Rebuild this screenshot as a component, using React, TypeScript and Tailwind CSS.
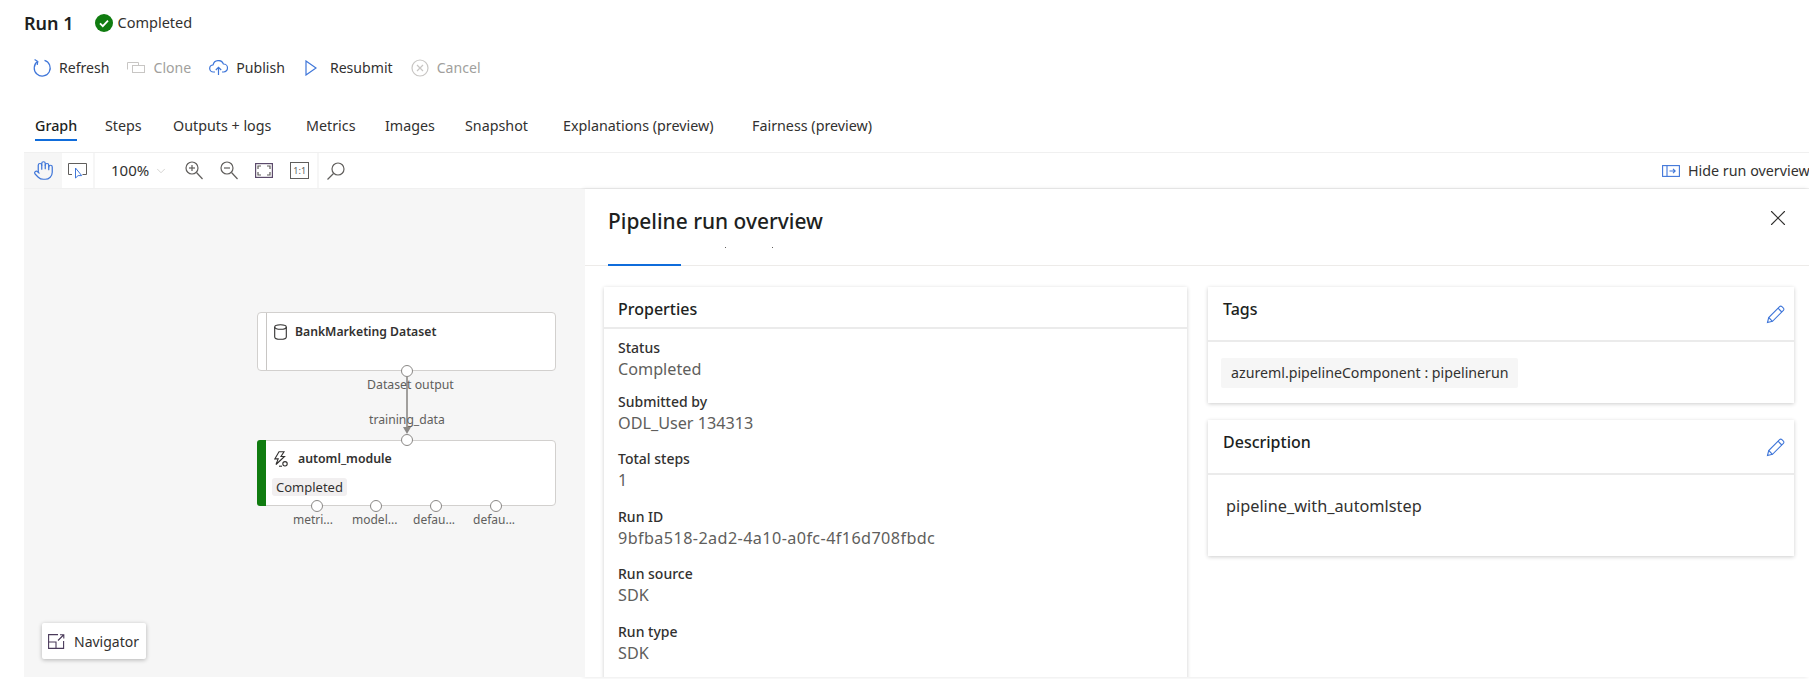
import { ChevronDown, Hand, X } from "lucide-react";

const BLUE = "#3f76d9";

const tabs = [
  { label: "Graph", width: "w-[42px]", gap: "mr-[28px]", active: true },
  { label: "Steps", width: "w-[37px]", gap: "mr-[31px]" },
  { label: "Outputs + logs", width: "w-[104px]", gap: "mr-[29px]" },
  { label: "Metrics", width: "w-[50px]", gap: "mr-[29px]" },
  { label: "Images", width: "w-[50px]", gap: "mr-[30px]" },
  { label: "Snapshot", width: "w-[63px]", gap: "mr-[35px]" },
  { label: "Explanations (preview)", width: "w-[152px]", gap: "mr-[37px]" },
  { label: "Fairness (preview)", width: "w-[121px]", gap: "" },
];

const properties = [
  { label: "Status", value: "Completed", spacing: "" },
  { label: "Submitted by", value: "ODL_User 134313", spacing: "" },
  { label: "Total steps", value: "1", spacing: "" },
  { label: "Run ID", value: "9bfba518-2ad2-4a10-a0fc-4f16d708fbdc", spacing: "tracking-[0.4px]" },
  { label: "Run source", value: "SDK", spacing: "" },
  { label: "Run type", value: "SDK", spacing: "" },
];

const outputPorts = [
  { x: "left-[54px]", lx: "left-[36px]", label: "metri..." },
  { x: "left-[113px]", lx: "left-[95px]", label: "model..." },
  { x: "left-[173px]", lx: "left-[156px]", label: "defau..." },
  { x: "left-[233px]", lx: "left-[216px]", label: "defau..." },
];

function RefreshIcon() {
  return (
    <svg width="20" height="20" viewBox="0 0 20 20" fill="none" stroke={BLUE} strokeWidth="1.2">
      <path d="M5.5 3.6A8 8 0 1 0 12.5 2.4" />
      <path d="M2.6 1.6 L5.8 3.6 L5.2 7" />
    </svg>
  );
}

function CloneIcon() {
  return (
    <svg width="18" height="12" viewBox="0 0 18 12" fill="none" stroke="#c8c6c4" strokeWidth="1">
      <path d="M.5 7.5v-7h11v3" />
      <rect x="5.5" y="3.5" width="12" height="7" />
    </svg>
  );
}

function PublishIcon() {
  return (
    <svg width="19" height="16" viewBox="0 0 19 16" fill="none" stroke={BLUE} strokeWidth="1.2">
      <path d="M6 12H4.5a3.6 3.6 0 0 1-.4-7.2A5.4 5.4 0 0 1 14.4 4a4 4 0 0 1 .2 8H13" />
      <path d="M9.5 15V7.5M6.8 10l2.7-2.7 2.7 2.7" />
    </svg>
  );
}

function ResubmitIcon() {
  return (
    <svg width="12" height="16" viewBox="0 0 12 16" fill="none" stroke={BLUE} strokeWidth="1.2">
      <path d="M1 1v14l10-7z" />
    </svg>
  );
}

function CancelIcon() {
  return (
    <svg width="18" height="18" viewBox="0 0 18 18" fill="none" stroke="#c8c6c4" strokeWidth="1.2">
      <circle cx="9" cy="9" r="8" />
      <path d="M6 6l6 6M12 6l-6 6" />
    </svg>
  );
}

function SelectIcon() {
  return (
    <svg width="19" height="16" viewBox="0 0 19 16" fill="none" stroke="#605e5c" strokeWidth="1">
      <path d="M4 11.5H.5V.5h18v11h-4" />
      <path d="M7.5 5v10l2.6-2.4h3.6z" stroke="#3f76d9" />
    </svg>
  );
}

function ZoomIcon({ plus }: { plus: boolean }) {
  return (
    <svg width="18" height="19" viewBox="0 0 18 19" fill="none" stroke="#605e5c" strokeWidth="1.2">
      <circle cx="7" cy="7" r="6" />
      <path d="M11.5 11.5L17.5 18" />
      <path d="M4 7h6" />
      {plus ? <path d="M7 4v6" /> : null}
    </svg>
  );
}

function FitIcon() {
  return (
    <svg width="18" height="15" viewBox="0 0 18 15" fill="none" stroke="#5b4a6b" strokeWidth="1.2">
      <rect x=".6" y=".6" width="16.8" height="13.8" />
      <path d="M3 6V3h3M12 3h3v3M15 9v3h-3M6 12H3V9" stroke="#605e5c" />
    </svg>
  );
}

function SearchIcon() {
  return (
    <svg width="18" height="18" viewBox="0 0 18 18" fill="none" stroke="#605e5c" strokeWidth="1.2">
      <circle cx="11" cy="7" r="6" />
      <path d="M6.5 11.5L.5 17.5" />
    </svg>
  );
}

function HidePanelIcon() {
  return (
    <svg width="18" height="12" viewBox="0 0 18 12" fill="none" stroke={BLUE} strokeWidth="1.1">
      <rect x=".6" y=".6" width="16.8" height="10.8" />
      <path d="M5 .6v10.8M7.5 6H13M11 3.8L13.2 6 11 8.2" />
    </svg>
  );
}

function PencilIcon() {
  return (
    <svg width="19" height="19" viewBox="0 0 19 19" fill="none" stroke={BLUE} strokeWidth="1.1">
      <path d="M1.5 17.5l1.2-5L13.6 1.6a1.6 1.6 0 0 1 2.3 0l1.5 1.5a1.6 1.6 0 0 1 0 2.3L6.5 16.3z" />
      <path d="M2.7 12.5l3.8 3.8M12 3.2l3.8 3.8" />
    </svg>
  );
}

function DatasetIcon() {
  return (
    <svg width="13" height="16" viewBox="0 0 13 16" fill="none" stroke="#323130" strokeWidth="1.1">
      <ellipse cx="6.5" cy="3" rx="5.8" ry="2.3" />
      <path d="M.7 3v10c0 1.3 2.6 2.3 5.8 2.3s5.8-1 5.8-2.3V3" />
    </svg>
  );
}

function ModuleIcon() {
  return (
    <svg width="14" height="16" viewBox="0 0 14 16" fill="none" stroke="#323130" strokeWidth="1.1">
      <path d="M5 .8h5L7 5.5h3.5L2 13.5l2.2-5.6H.8z" />
      <circle cx="11" cy="12.8" r="2.2" />
      <path d="M5 15.2h3" />
    </svg>
  );
}

function NavigatorIcon() {
  return (
    <svg width="17" height="15" viewBox="0 0 17 15" fill="none" stroke="#4a3a5a" strokeWidth="1.1">
      <path d="M10 .6H.6v13.8h15V7" />
      <path d="M.6 8h7.4v6.4" />
      <path d="M10 6.5L15.5 1M12 .8h3.8v3.8" />
    </svg>
  );
}

function Port({ className }: { className: string }) {
  return (
    <span
      className={`absolute h-[12px] w-[12px] rounded-full border border-[#8a8886] bg-white ${className}`}
    />
  );
}

function Graph() {
  return (
    <div className="relative h-full w-[561px] shrink-0 bg-[#f6f6f6] text-[#605e5c]">
      {/* edge between the two nodes */}
      <div className="absolute left-[382px] top-[188px] h-[55px] w-[2px] bg-[#a19f9d]" />
      <div className="absolute left-[379px] top-[238px] h-0 w-0 border-x-[4px] border-t-[7px] border-x-transparent border-t-[#8a8886]" />

      {/* dataset node */}
      <div className="absolute left-[233px] top-[123px] flex h-[59px] w-[299px] rounded-[4px] border border-[#d2d0ce] bg-white">
        <div className="w-[9px] border-r border-[#c8c6c4]" />
        <div className="flex h-[38px] items-center pl-[7px]">
          <DatasetIcon />
          <span className="ml-[8px] whitespace-nowrap text-[12.2px] font-semibold text-[#323130]">
            BankMarketing Dataset
          </span>
        </div>
      </div>
      <Port className="left-[377px] top-[176px]" />
      <span className="absolute left-[343px] top-[186px] text-[12.3px] leading-[20px]">
        Dataset output
      </span>
      <span className="absolute left-[345px] top-[221px] text-[12.2px] leading-[20px]">
        training_data
      </span>

      {/* automl node */}
      <div className="absolute left-[233px] top-[251px] flex h-[66px] w-[299px] rounded-[4px] border border-[#d2d0ce] bg-white">
        <div className="-my-px -ml-px w-[9px] rounded-l-[3px] bg-[#107c10]" />
        <div className="pl-[8px] pt-[9px]">
          <div className="flex items-center">
            <ModuleIcon />
            <span className="ml-[10px] text-[12.3px] font-semibold text-[#323130]">automl_module</span>
          </div>
          <span className="-ml-[2px] mt-[10px] block w-fit rounded-[3px] bg-[#f1eff0] px-[4px] text-[13px] leading-[18px] text-[#323130]">
            Completed
          </span>
        </div>
      </div>
      <Port className="left-[377px] top-[245px]" />
      <div className="absolute left-[233px] top-[311px] h-[30px] w-[299px]">
        {outputPorts.map((port) => (
          <div key={port.x}>
            <Port className={`${port.x} top-0`} />
            <span className={`absolute ${port.lx} top-[11px] text-[12px] leading-[18px]`}>
              {port.label}
            </span>
          </div>
        ))}
      </div>

      {/* navigator button */}
      <div className="absolute left-[18px] top-[434px] flex h-[36px] w-[104px] items-center rounded-[2px] bg-white pl-[6px] shadow-[0_1px_4px_rgba(0,0,0,0.28)]">
        <NavigatorIcon />
        <span className="ml-[9px] text-[14px] text-[#323130]">Navigator</span>
      </div>
    </div>
  );
}

function Card({
  title,
  className,
  headerClass,
  edit,
  children,
}: {
  title: string;
  className: string;
  headerClass: string;
  edit?: boolean;
  children: React.ReactNode;
}) {
  return (
    <div className={`bg-white shadow-[0_1px_4px_rgba(0,0,0,0.2)] ${className}`}>
      <div className={`flex items-start justify-between border-b-2 border-[#ebebeb] ${headerClass}`}>
        <span className="text-[16px] font-medium leading-[24px] text-[#201f1e]">{title}</span>
        {edit ? <span className="pt-[8px]"><PencilIcon /></span> : null}
      </div>
      {children}
    </div>
  );
}

function Overview() {
  return (
    <div className="h-full min-w-0 flex-1 bg-white shadow-[-2px_0_4px_rgba(0,0,0,0.12)]">
      <div className="relative h-[77px] border-b border-[#edebe9] pl-[23px]">
        <h2 className="pt-[17px] text-[20.9px] font-medium leading-[30px] text-[#201f1e]">
          Pipeline run overview
        </h2>
        <div className="absolute bottom-[-1px] left-[23px] h-[2px] w-[73px] bg-[#0f6cdb]" />
        <span className="absolute left-[140px] top-[58px] h-[1px] w-[1px] bg-[#605e5c]" />
        <span className="absolute left-[187px] top-[58px] h-[1px] w-[1px] bg-[#605e5c]" />
        <X className="absolute right-[18px] top-[16px] h-[26px] w-[26px] text-[#323130]" strokeWidth={1} />
      </div>
      <div className="flex h-[411px] gap-[21px] overflow-hidden pl-[19px] pt-[21px]">
        <Card title="Properties" className="h-[420px] w-[583px]" headerClass="h-[42px] px-[14px] pt-[10px]">
          <dl className="px-[14px] pt-[8px]">
            {properties.map((row) => (
              <div key={row.label} className="mb-[13.4px] first:mb-[10px]">
                <dt className="text-[14px] font-medium leading-[21px] text-[#323130]">{row.label}</dt>
                <dd className={`text-[16.2px] leading-[23px] text-[#605e5c] ${row.spacing}`}>{row.value}</dd>
              </div>
            ))}
          </dl>
        </Card>
        <div className="flex w-[586px] flex-col gap-[17px]">
          <Card title="Tags" className="h-[116px]" headerClass="h-[55px] pl-[15px] pr-[9px] pt-[10px]" edit>
            <div className="pl-[13px] pt-[16px]">
              <span className="inline-block rounded-[2px] bg-[#f6f6f6] px-[10px] text-[14.2px] leading-[30px] text-[#323130]">
                azureml.pipelineComponent : pipelinerun
              </span>
            </div>
          </Card>
          <Card title="Description" className="h-[136px]" headerClass="h-[55px] pl-[15px] pr-[9px] pt-[10px]" edit>
            <p className="pl-[18px] pt-[19px] text-[16.3px] leading-[24px] text-[#323130]">
              pipeline_with_automlstep
            </p>
          </Card>
        </div>
      </div>
    </div>
  );
}

export default function App() {
  return (
    <div className="h-[679px] w-[1809px] overflow-hidden bg-white pl-[24px] font-['Noto_Sans',sans-serif] text-[#323130]">
      <div className="flex h-[46px] items-center">
        <h1 className="text-[18px] font-semibold text-[#201f1e]">Run 1</h1>
        <svg className="ml-[21px]" width="18" height="18" viewBox="0 0 18 18">
          <circle cx="9" cy="9" r="9" fill="#107c10" />
          <path d="M5 9.4l2.8 2.8L13 6.6" fill="none" stroke="#fff" strokeWidth="1.8" />
        </svg>
        <span className="ml-[5px] text-[14.5px]">Completed</span>
      </div>

      <div className="flex h-[44px] items-center pl-[8px] text-[14.1px]">
        <RefreshIcon />
        <span className="ml-[7px]">Refresh</span>
        <span className="ml-[17px]"><CloneIcon /></span>
        <span className="ml-[9px] text-[#a19f9d]">Clone</span>
        <span className="ml-[18px]"><PublishIcon /></span>
        <span className="ml-[8px]">Publish</span>
        <span className="ml-[20px]"><ResubmitIcon /></span>
        <span className="ml-[13px]">Resubmit</span>
        <span className="ml-[18px]"><CancelIcon /></span>
        <span className="ml-[8px] text-[#a19f9d]">Cancel</span>
      </div>

      <div className="flex h-[62px] items-start pl-[11px] pt-[25px] text-[14.3px] leading-[22px]">
        {tabs.map((tab) => (
          <div key={tab.label} className={`relative shrink-0 ${tab.width} ${tab.gap}`}>
            <span className={`whitespace-nowrap ${tab.active ? "font-medium text-[#201f1e]" : ""}`}>
              {tab.label}
            </span>
            {tab.active ? (
              <div className="absolute left-0 top-[24px] h-[2px] w-full bg-[#0f6cdb]" />
            ) : null}
          </div>
        ))}
      </div>

      <div className="flex h-[37px] items-center border-y border-[#f0f0f0] text-[14.3px]">
        <div className="flex h-full w-[38px] items-center justify-center bg-[#f6f6f6]">
          <Hand className="h-[21px] w-[21px] text-[#3f76d9]" strokeWidth={1.4} />
        </div>
        <div className="flex h-full w-[33px] items-center justify-center border-r-2 border-[#f6f6f6]">
          <SelectIcon />
        </div>
        <span className="ml-[16px] text-[15px]">100%</span>
        <ChevronDown className="ml-[5px] h-[14px] w-[14px] text-[#c8c6c4]" strokeWidth={1.3} />
        <span className="ml-[17px]"><ZoomIcon plus /></span>
        <span className="ml-[17px]"><ZoomIcon plus={false} /></span>
        <span className="ml-[17px]"><FitIcon /></span>
        <span className="ml-[17px] flex h-[17px] w-[19px] items-center justify-center border border-[#605e5c] text-[9px] leading-none text-[#605e5c]">
          1:1
        </span>
        <span className="ml-[8px] h-full border-l-2 border-[#f6f6f6]" />
        <span className="ml-[8px]"><SearchIcon /></span>
        <div className="ml-auto flex items-center whitespace-nowrap">
          <HidePanelIcon />
          <span className="ml-[8px] w-[121px]">Hide run overview</span>
        </div>
      </div>

      <div className="flex h-[488px]">
        <Graph />
        <Overview />
      </div>
    </div>
  );
}
